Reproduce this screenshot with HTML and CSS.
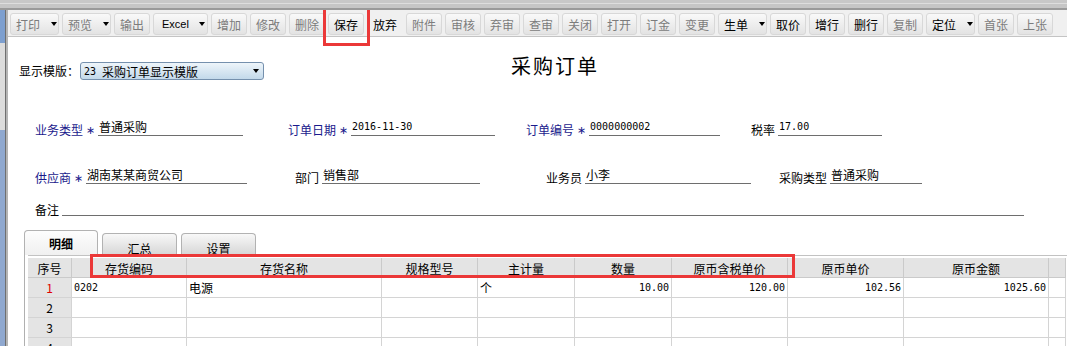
FILE: index.html
```html
<!DOCTYPE html>
<html lang="zh-CN">
  <head>
    <meta charset="UTF-8" />
    <title>采购订单</title>
    <link rel="stylesheet" href="styles.css">
  </head>
  <body>
    <div class="stripe"></div>
    <div class="window">
      <div class="side"></div>
      <div class="main">
        <!-- 工具栏 -->
        <div class="toolbar">
          <span class="btn off drop">打印<i class="arrow"></i></span>
          <span class="btn off drop">预览<i class="arrow"></i></span>
          <span class="btn off">输出</span>
          <span class="btn drop excel">Excel<i class="arrow"></i></span>
          <span class="btn off">增加</span>
          <span class="btn off">修改</span>
          <span class="btn off">删除</span>
          <span class="btn">保存</span>
          <span class="btn flat">放弃</span>
          <span class="btn off">附件</span>
          <span class="btn off">审核</span>
          <span class="btn off">弃审</span>
          <span class="btn off">查审</span>
          <span class="btn off">关闭</span>
          <span class="btn off">打开</span>
          <span class="btn off">订金</span>
          <span class="btn off">变更</span>
          <span class="btn drop">生单<i class="arrow"></i></span>
          <span class="btn">取价</span>
          <span class="btn">增行</span>
          <span class="btn">删行</span>
          <span class="btn off">复制</span>
          <span class="btn drop">定位<i class="arrow"></i></span>
          <span class="btn off">首张</span>
          <span class="btn off">上张</span>
        </div>

        <div class="head">
          <span class="hlabel">显示模版：</span>
          <div class="select"><span class="num code">23</span>采购订单显示模版<i class="arrow"></i></div>
          <h1 class="title">采购订单</h1>
        </div>

        <!-- 表头 -->
        <div class="frow frow1">
          <div class="field f-type">
            <span class="lbl must">业务类型</span><span class="star">∗</span>
            <span class="val">普通采购</span>
          </div>
          <div class="field f-date">
            <span class="lbl must">订单日期</span><span class="star">∗</span>
            <span class="val num">2016-11-30</span>
          </div>
          <div class="field f-no">
            <span class="lbl must">订单编号</span><span class="star">∗</span>
            <span class="val num">0000000002</span>
          </div>
          <div class="field f-tax">
            <span class="lbl">税率</span>
            <span class="val num">17.00</span>
          </div>
        </div>
        <div class="frow frow2">
          <div class="field f-vendor">
            <span class="lbl must">供应商</span><span class="star">∗</span>
            <span class="val">湖南某某商贸公司</span>
          </div>
          <div class="field f-dept">
            <span class="lbl">部门</span>
            <span class="val">销售部</span>
          </div>
          <div class="field f-person">
            <span class="lbl">业务员</span>
            <span class="val">小李</span>
          </div>
          <div class="field f-ptype">
            <span class="lbl">采购类型</span>
            <span class="val">普通采购</span>
          </div>
        </div>
        <div class="frow frow3">
          <div class="field f-memo">
            <span class="lbl">备注</span>
            <span class="val"></span>
          </div>
        </div>

        <div class="tabs">
          <span class="tab on">明细</span>
          <span class="tab">汇总</span>
          <span class="tab">设置</span>
        </div>

        <div class="panel">
          <div class="grid">
            <div class="grow ghead">
              <span>序号</span><span>存货编码</span><span>存货名称</span><span>规格型号</span><span>主计量</span>
              <span>数量</span><span>原币含税单价</span><span>原币单价</span><span>原币金额</span><span></span>
            </div>
            <div class="grow">
              <span class="red">1</span><span class="num">0202</span><span>电源</span><span></span><span>个</span>
              <span class="num r">10.00</span><span class="num r">120.00</span><span class="num r">102.56</span><span class="num r">1025.60</span><span></span>
            </div>
            <div class="grow">
              <span>2</span><span></span><span></span><span></span><span></span>
              <span></span><span></span><span></span><span></span><span></span>
            </div>
            <div class="grow">
              <span>3</span><span></span><span></span><span></span><span></span>
              <span></span><span></span><span></span><span></span><span></span>
            </div>
            <div class="grow">
              <span>4</span><span></span><span></span><span></span><span></span>
              <span></span><span></span><span></span><span></span><span></span>
            </div>
          </div>
        </div>
      </div>
    </div>

    <!-- 标注框 -->
    <div class="mark mark-save"></div>
    <div class="mark mark-head"></div>
  </body>
</html>
```

FILE: styles.css
```css
* {
  box-sizing: border-box;
}
html,
body {
  margin: 0;
  width: 1067px;
  height: 346px;
  overflow: hidden;
}
body {
  position: relative;
  font-family: "Noto Sans CJK SC", "Liberation Sans", sans-serif;
  font-size: 12px;
  color: #000;
  background: #fff;
}

.num {
  font-family: "DejaVu Sans Mono", "Liberation Mono", monospace;
  font-size: 10px;
}

.stripe {
  height: 10px;
  background: linear-gradient(
    to bottom,
    #c8c8c8 0 3px,
    #dedede 3px 4px,
    #c6c6c6 4px 8px,
    #9a9a9a 8px 10px
  );
}

.window {
  display: flex;
  height: 336px;
}
.side {
  width: 6px;
  background: linear-gradient(
    to bottom,
    #7d9fcf 0 33px,
    #dcdcdc 33px 120px,
    #8fa8cf 120px
  );
  border-right: 1px solid #6f6f6f;
}
.main {
  flex: 1;
  border-left: 2px solid #b4b4b4;
  background: #fff;
}

/* 工具栏 */
.toolbar {
  display: flex;
  align-items: flex-start;
  height: 27px;
  padding: 3px 0 0 2px;
  background: #f0f0f0;
  border-bottom: 1px solid #c4c4c4;
  overflow: hidden;
}
.btn {
  flex: none;
  display: flex;
  align-items: center;
  justify-content: center;
  width: 36px;
  height: 22px;
  margin-right: 3px;
  border: 1px solid #d8d8d8;
  border-radius: 3px;
  background: linear-gradient(#f9f9f9, #e3e3e3);
  white-space: nowrap;
}
.btn.off {
  color: #7c7c7c;
}
.btn.flat {
  border-color: transparent;
  background: none;
}
.btn.drop {
  width: 49px;
  justify-content: flex-start;
  padding-left: 5px;
}
.btn.excel {
  width: 55px;
  padding-left: 8px;
  font-family: "Liberation Sans", sans-serif;
  font-size: 11px;
}
.arrow {
  display: inline-block;
  width: 1px;
  height: 0;
  border-top: 4px solid #000;
  border-left: 3px solid transparent;
  border-right: 3px solid transparent;
}
.btn .arrow {
  margin-left: 11px;
}
.btn.excel .arrow {
  margin-left: 10px;
}

/* 模版 + 标题 */
.head {
  display: flex;
  align-items: flex-start;
  height: 61px;
  padding-left: 11px;
}
.hlabel {
  margin-top: 25px;
  width: 61px;
  line-height: 18px;
}
.select {
  display: flex;
  align-items: center;
  margin-top: 25px;
  width: 184px;
  height: 18px;
  padding-left: 3px;
  border: 1px solid #7590ad;
  border-radius: 3px;
  background: linear-gradient(#eef5fa, #c3d9ea);
}
.select .code {
  margin-right: 6px;
}
.select .arrow {
  margin-left: auto;
  margin-right: 4px;
}
.title {
  margin: 19px 0 0 247px;
  font-size: 20px;
  font-weight: normal;
  line-height: 20px;
  letter-spacing: 2px;
}

/* 表头字段 */
.frow {
  display: flex;
  align-items: flex-end;
  padding-left: 27px;
}
.frow1 {
  height: 38px;
}
.frow2 {
  height: 48px;
}
.frow3 {
  height: 32px;
}
.field {
  display: flex;
  align-items: flex-end;
}
.lbl {
  line-height: 16px;
  margin-bottom: -2px;
  margin-right: 3px;
  white-space: nowrap;
}
.lbl.must {
  color: #1a1a8c;
  margin-right: 0;
}
.star {
  width: 15px;
  line-height: 16px;
  margin-bottom: -3px;
  text-align: center;
  color: #1a1a8c;
  font-family: "DejaVu Sans", sans-serif;
  font-size: 11px;
}
.val {
  height: 17px;
  padding-left: 1px;
  line-height: 15px;
  border-bottom: 1px solid #6e6e6e;
  white-space: nowrap;
}
.f-type .val {
  width: 145px;
}
.f-date {
  margin-left: 45px;
}
.f-date .val {
  width: 144px;
}
.f-no {
  margin-left: 31px;
}
.f-no .val {
  width: 131px;
}
.f-tax {
  margin-left: 31px;
}
.f-tax .val {
  width: 104px;
}
.f-vendor .val {
  width: 161px;
}
.f-dept {
  margin-left: 48px;
}
.f-dept .val {
  width: 158px;
}
.f-person {
  margin-left: 66px;
}
.f-person .val {
  width: 166px;
}
.f-ptype {
  margin-left: 28px;
}
.f-ptype .val {
  width: 92px;
}
.f-memo .val {
  width: 962px;
}

/* 页签 */
.tabs {
  display: flex;
  align-items: flex-end;
  gap: 4px;
  height: 25px;
  margin-top: 14px;
  padding-left: 16px;
}
.tab {
  width: 75px;
  height: 22px;
  padding-top: 7px;
  line-height: 16px;
  text-align: center;
  border: 1px solid #b2b2b2;
  border-bottom: 0;
  border-radius: 4px 4px 0 0;
  background: linear-gradient(#f8f8f8, #d6d6d6);
}
.tab.on {
  width: 74px;
  height: 25px;
  padding-top: 5px;
  font-weight: bold;
  background: linear-gradient(#fdfdfd, #f0f0f0);
}

/* 表体 */
.panel {
  margin-left: 16px;
  padding-left: 3px;
  border-left: 1px solid #b0b0b0;
  height: 100px;
}
.grid {
  border-top: 1px solid #c2c2c2;
  padding-top: 2px;
}
.grow {
  display: grid;
  grid-template-columns: 44px 115px 195px 96px 97px 97px 116px 116px 145px 17px;
  height: 20px;
}
.grow > span {
  padding: 0 2px;
  line-height: 19px;
  white-space: nowrap;
  overflow: hidden;
  border-right: 1px solid #d4d4d4;
  border-bottom: 1px solid #d4d4d4;
}
.grow > span:first-child {
  text-align: center;
  background: #e4e4e4;
}
.grow > span.r {
  text-align: right;
}
.grow > span.red {
  color: #e00000;
}
.ghead > span {
  padding-top: 1px;
  text-align: center;
  background: #e4e4e4;
  border-color: #cacaca;
}

/* 红色标注 */
.mark {
  position: absolute;
  border: 3px solid #eb3838;
}
.mark-save {
  left: 323px;
  top: 10px;
  width: 47px;
  height: 36px;
  border-top: 0;
}
.mark-head {
  left: 90px;
  top: 254px;
  width: 705px;
  height: 24px;
}
```
